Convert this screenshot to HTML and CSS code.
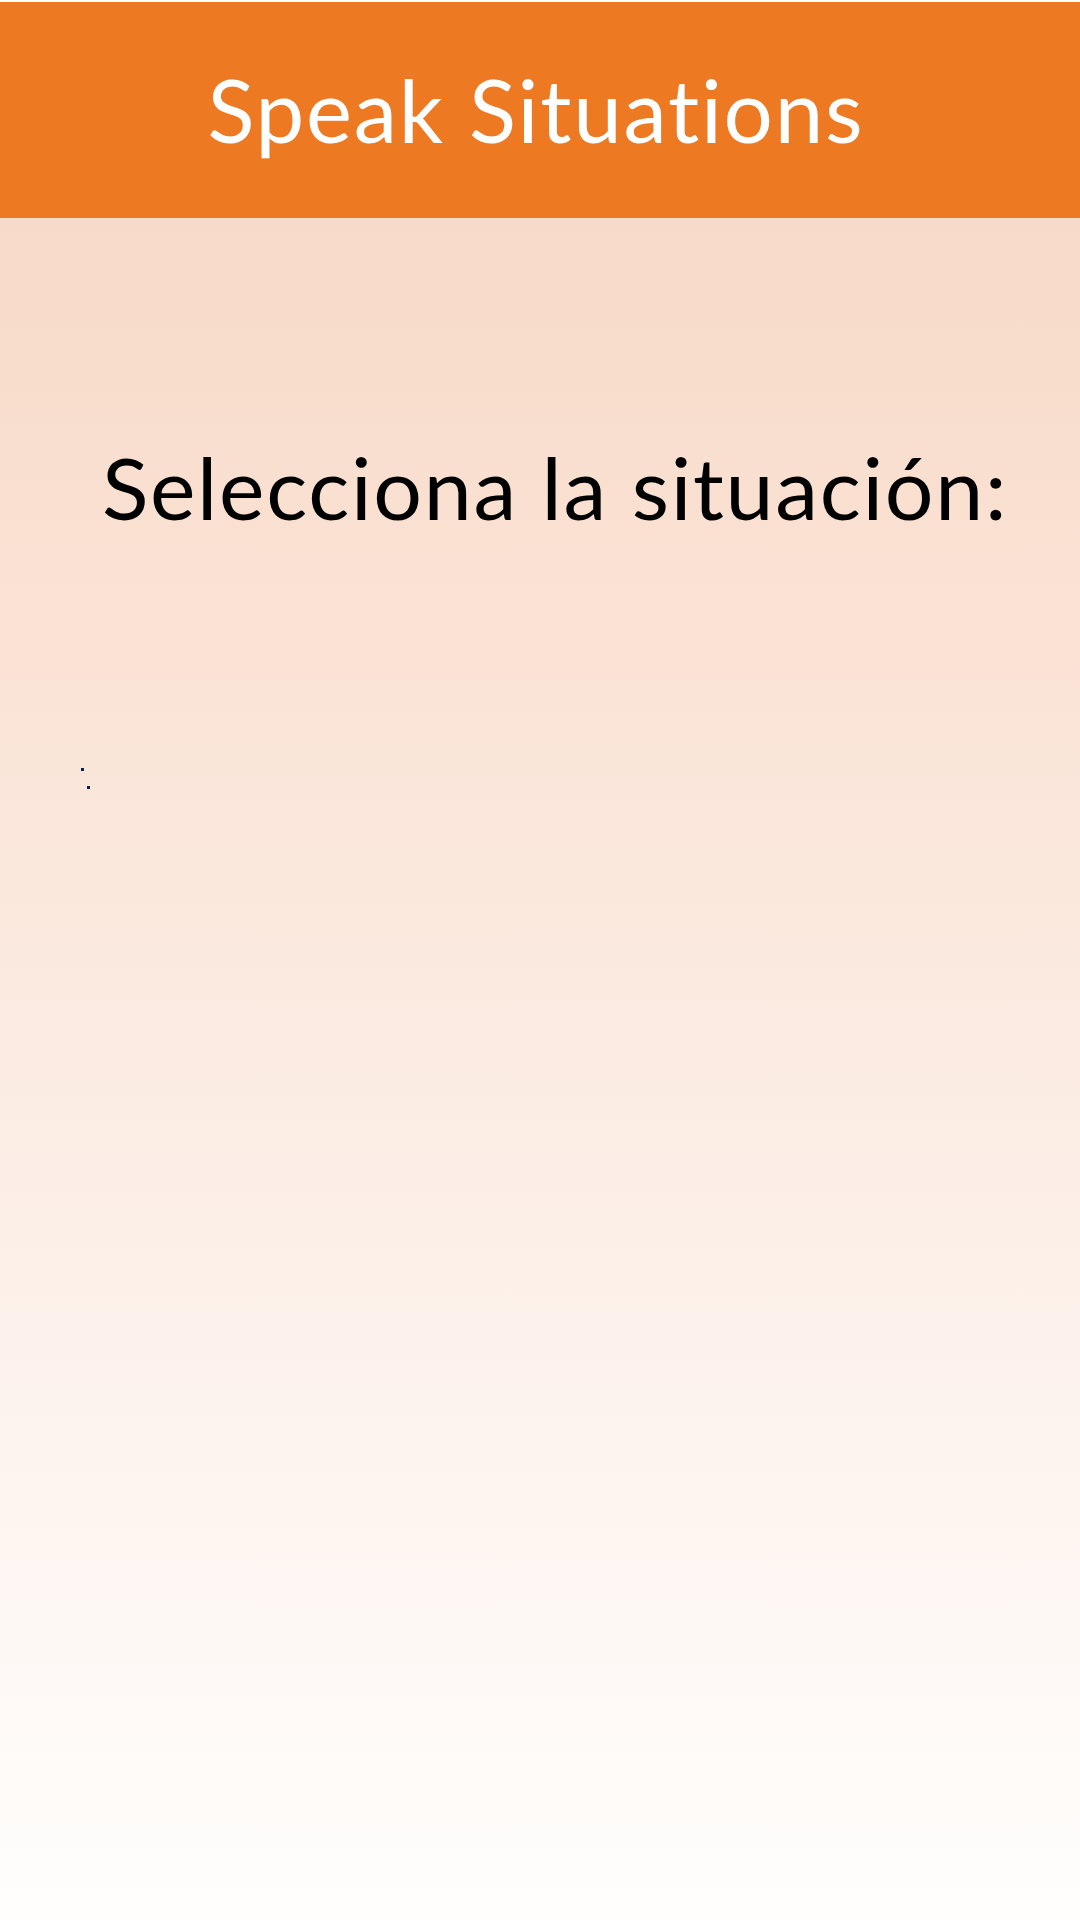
FILE: index.html
```html
<!DOCTYPE html>
<html lang="es">
<head>
<meta charset="utf-8">
<title>Speak Situations</title>
<link rel="stylesheet" href="styles.css">
</head>
<body>
<header class="topbar"><h1 class="title">Speak Situations</h1></header>
<main class="content">
  <h2 class="prompt">Selecciona la situación:</h2>
  <div class="dots"><span class="dot"></span><span class="dot dot-second"></span></div>
</main>
</body>
</html>
```
FILE: styles.css
```css
html, body { margin: 0; padding: 0; }
body {
  background: #ffffff;
  font-family: Lato, "Open Sans", sans-serif;
  font-variant-ligatures: none;
  padding-top: 2px;
}
.topbar {
  height: 216px;
  box-sizing: border-box;
  padding-right: 8px;
  background: #ED7A22;
  display: flex;
  align-items: center;
  justify-content: center;
}
.title {
  margin: 0;
  color: #ffffff;
  font-weight: 400;
  font-size: 87px;
  letter-spacing: 1.8px;
  line-height: 1.2;
}
.content {
  min-height: 1702px;
  box-sizing: border-box;
  padding-top: 217px;
  background: linear-gradient(180deg, #F8DAC8 0%, #FBEAE0 45%, #FFFEFD 100%);
}
.prompt {
  margin: 0;
  padding-left: 30px;
  text-align: center;
  color: #000000;
  font-weight: 400;
  font-size: 86px;
  letter-spacing: 1.7px;
  line-height: 1.2;
}
.dots {
  margin-top: 230px;
  padding-left: 81px;
  display: flex;
  flex-direction: column;
  align-items: flex-start;
}
.dot {
  width: 3px;
  height: 3px;
  background: #0B1F4A;
}
.dot-second {
  margin-top: 15px;
  margin-left: 6px;
}
```
